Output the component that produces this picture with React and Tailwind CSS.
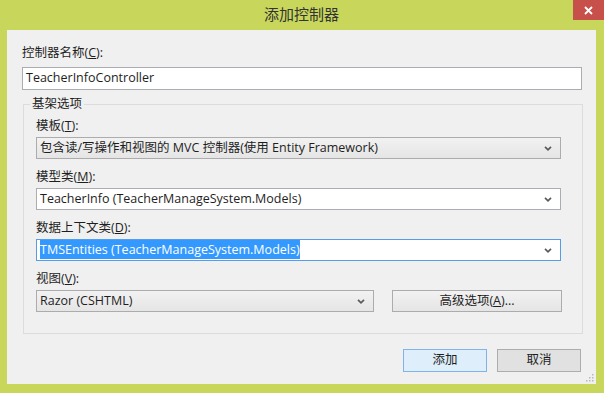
import React from 'react';

const font = { fontFamily: '"Open Sans", "Noto Sans CJK SC", sans-serif' };

const Chevron = () => (
  <svg width="8" height="5" viewBox="0 0 8 5" className="shrink-0">
    <polyline points="1,0.8 4,3.8 7,0.8" fill="none" stroke="#5a5a5a" strokeWidth="1.7" />
  </svg>
);

const Label = ({ text, k, tail = '):' }) => (
  <div className="h-[16px] leading-[16px] text-[12.5px] text-[#1e1e1e]">
    {text}(<span className="underline">{k}</span>{tail}
  </div>
);

const Select = ({ value, variant = 'gray', width = 'w-[525px]', selected = false }) => {
  const box = {
    gray: 'bg-gradient-to-b from-[#f2f2f2] to-[#e5e5e5] border-[#acacac]',
    white: 'bg-white border-[#abadb3]',
    focus: 'bg-white border-[#569de5]',
  }[variant];
  return (
    <div className={`mt-[3px] h-[22px] ${width} border ${box} flex items-center pl-[3px] pr-[8px]`}>
      <div className="flex-1 text-[12.5px] leading-[16px] text-[#1e1e1e] whitespace-nowrap">
        {selected ? <span className="bg-[#3399ff] text-white py-[1px]">{value}</span> : value}
      </div>
      <Chevron />
    </div>
  );
};

export default function App() {
  return (
    <div className="w-[604px] h-[393px] bg-[#c8d75c] flex flex-col pl-[7px] pr-[8px] pb-[9px]" style={font}>
      <div className="relative h-[30px] flex items-center justify-center">
        <span className="text-[15px] text-[#333] pb-[1px]">添加控制器</span>
        <div className="absolute top-0 right-[-8px] w-[31px] h-[20px] bg-[#c7504b] flex items-center justify-center">
          <svg width="9" height="9" viewBox="0 0 9 9">
            <path d="M1 1 L8 8 M8 1 L1 8" stroke="#fff" strokeWidth="1.8" />
          </svg>
        </div>
      </div>

      <div className="relative flex-1 bg-[#f0f0f0] pt-[15px] pl-[15px] pr-[14px]">
        <Label text="控制器名称" k="C" />
        <div className="mt-[6px] h-[23px] bg-white border border-[#abadb3] flex items-center px-[3px] text-[12.5px] text-[#1e1e1e]">
          TeacherInfoController
        </div>

        <fieldset className="mt-[6px] ml-[1px] -mr-[1px] border border-[#dcdcdc] pl-[12px] pr-[20px] pb-[21px]">
          <legend className="-ml-[6px] px-[2px] text-[12.5px] leading-[16px] text-[#1e1e1e]">基架选项</legend>
          <div className="mt-[6px]">
            <Label text="模板" k="T" />
            <Select value="包含读/写操作和视图的 MVC 控制器(使用 Entity Framework)" />
          </div>
          <div className="mt-[10px]">
            <Label text="模型类" k="M" />
            <Select value="TeacherInfo (TeacherManageSystem.Models)" variant="white" />
          </div>
          <div className="mt-[10px]">
            <Label text="数据上下文类" k="D" />
            <Select value="TMSEntities (TeacherManageSystem.Models)" variant="focus" selected />
          </div>
          <div className="mt-[10px]">
            <Label text="视图" k="V" />
            <div className="flex gap-[18px]">
              <Select value="Razor (CSHTML)" width="w-[338px]" />
              <div className="mt-[3px] h-[22px] flex-1 border border-[#acacac] bg-gradient-to-b from-[#f2f2f2] to-[#e5e5e5] flex items-center justify-center text-[12.5px] text-[#1e1e1e]">
                高级选项(<span className="underline">A</span>)...
              </div>
            </div>
          </div>
        </fieldset>

        <div className="mt-[15px] flex justify-end gap-[10px] pr-[1px]">
          <div className="w-[84px] h-[23px] border border-[#7eb4ea] bg-[#dfeefb] flex items-center justify-center text-[12.5px] text-[#1e1e1e]">
            添加
          </div>
          <div className="w-[84px] h-[23px] border border-[#adadad] bg-[#e1e1e1] flex items-center justify-center text-[12.5px] text-[#1e1e1e]">
            取消
          </div>
        </div>

        <svg className="absolute right-[2px] bottom-[2px]" width="8" height="8" viewBox="0 0 8 8">
          <rect x="6" y="0" width="1.5" height="1.5" fill="#b8b8b8" />
          <rect x="3" y="3" width="1.5" height="1.5" fill="#b8b8b8" />
          <rect x="6" y="3" width="1.5" height="1.5" fill="#b8b8b8" />
          <rect x="0" y="6" width="1.5" height="1.5" fill="#b8b8b8" />
          <rect x="3" y="6" width="1.5" height="1.5" fill="#b8b8b8" />
          <rect x="6" y="6" width="1.5" height="1.5" fill="#b8b8b8" />
        </svg>
      </div>
    </div>
  );
}
